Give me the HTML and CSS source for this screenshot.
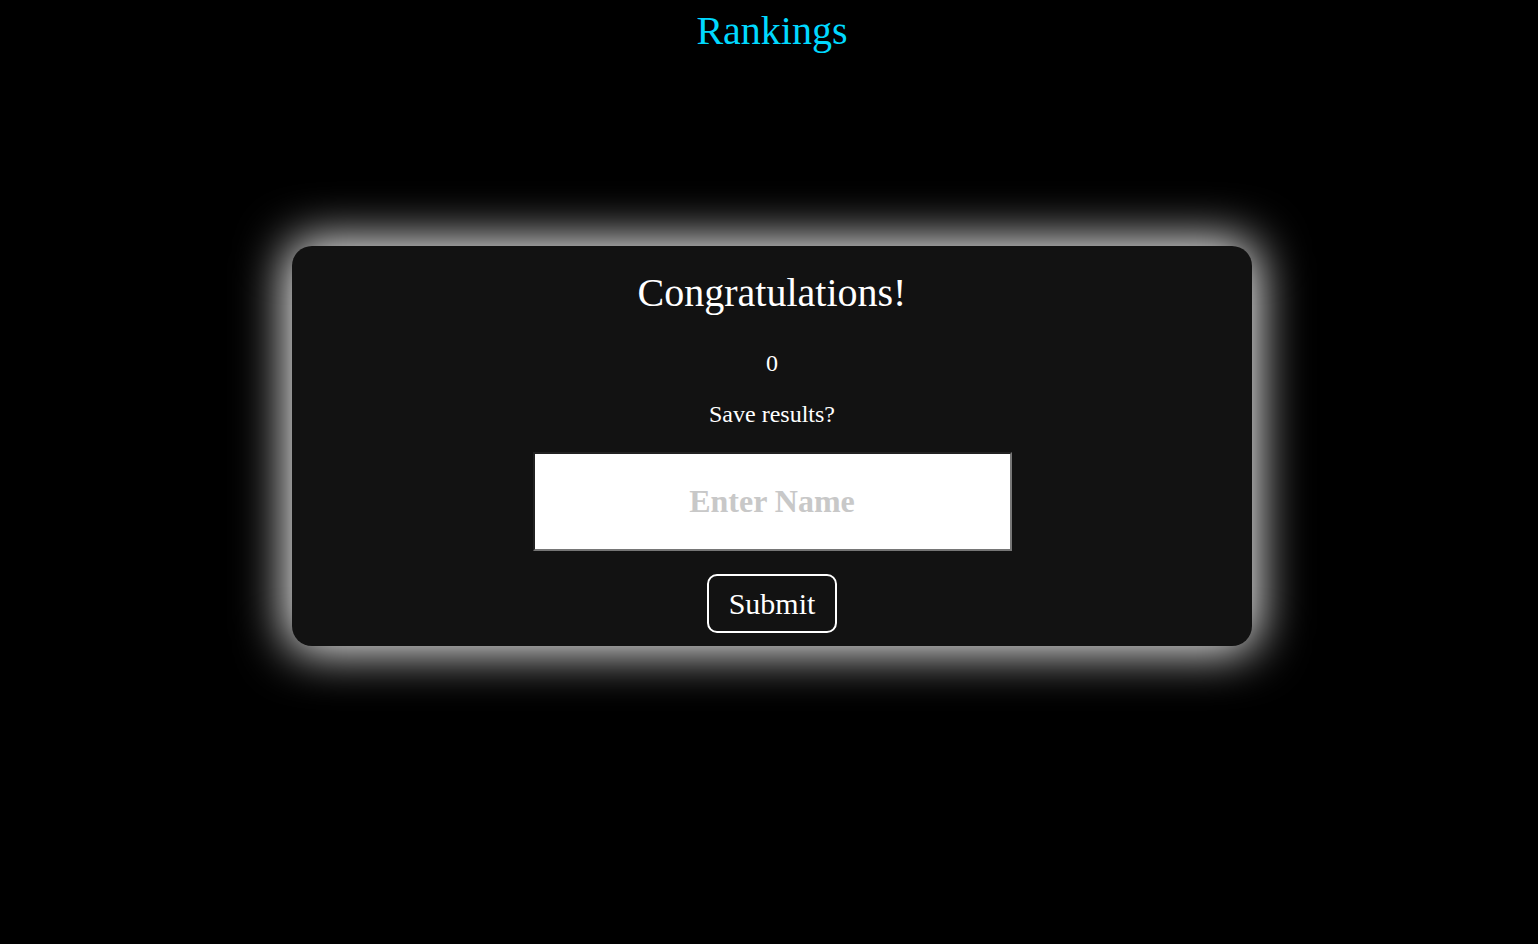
FILE: index.html
```html
<!DOCTYPE html>
<html lang="en">
<head>
<meta charset="utf-8">
<title>Rankings</title>
<link rel="stylesheet" href="styles.css">
</head>
<body>
<div class="page">
  <h1 class="title">Rankings</h1>
  <main class="card">
    <h2 class="congrats">Congratulations!</h2>
    <p class="score">0</p>
    <p class="save">Save results?</p>
    <input class="name-input" type="text" placeholder="Enter Name">
    <button class="submit" type="button">Submit</button>
  </main>
</div>
</body>
</html>
```

FILE: styles.css
```css
html, body {
  margin: 0;
  padding: 0;
  background: #000;
  height: 100%;
}

body {
  font-family: "Liberation Serif", "Times New Roman", serif;
  color: #fff;
}

.page {
  padding-left: 6px;
  display: flex;
  flex-direction: column;
  align-items: center;
}

.title {
  margin: 8px 0 0;
  font-size: 40px;
  line-height: 46px;
  font-weight: normal;
  color: #00d9ff;
}

.card {
  margin-top: 192px;
  width: 960px;
  height: 400px;
  box-sizing: border-box;
  padding-top: 24px;
  background: #121212;
  border-radius: 20px;
  box-shadow: 0 0 50px 5px #fff;
  display: flex;
  flex-direction: column;
  align-items: center;
}

.congrats {
  margin: 0;
  font-size: 40px;
  line-height: 46px;
  font-weight: normal;
}

.score {
  margin: 33px 0 0;
  font-size: 24px;
  line-height: 28px;
}

.save {
  margin: 23px 0 0;
  font-size: 24px;
  line-height: 28px;
}

.name-input {
  margin: 24px 0 0;
  width: 479px;
  height: 99px;
  box-sizing: border-box;
  border: 2px inset #767676;
  background: #fff;
  padding: 0 10px;
  font-family: "Liberation Serif", "Times New Roman", serif;
  font-size: 32px;
  font-weight: bold;
  text-align: center;
  color: #000;
  outline: none;
}

.name-input::placeholder {
  color: #c8c8c8;
  opacity: 1;
}

.submit {
  margin: 23px 0 0;
  padding: 10px 20px;
  font-family: "Liberation Serif", "Times New Roman", serif;
  font-size: 30px;
  line-height: 35px;
  color: #fff;
  background: #121212;
  border: 2px solid #fff;
  border-radius: 10px;
  cursor: pointer;
}
```
